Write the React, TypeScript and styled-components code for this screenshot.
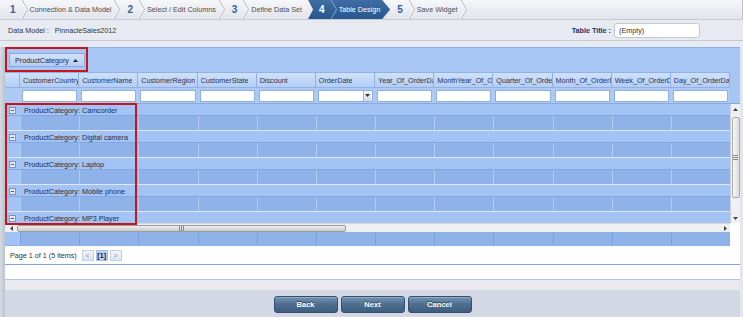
import React from 'react';
import styled, { createGlobalStyle } from 'styled-components';

const Global = createGlobalStyle`
  html, body { margin: 0; padding: 0; }
  body { background: #e8eaf1; font-family: "Liberation Sans", Arial, sans-serif; }
  * { box-sizing: border-box; }
`;

const Page = styled.div`
  position: relative;
  width: 743px;
  height: 317px;
  overflow: hidden;
  display: flex;
  flex-direction: column;
  background: #e8eaf1;
  font-size: 7.2px;
  color: #333;
`;

/* ---------- Wizard ---------- */
const Wizard = styled.div`
  height: 20px;
  flex: none;
  display: flex;
  align-items: stretch;
  padding-left: 3px;
  background: linear-gradient(#f6f7fa, #e1e4eb);
  border-bottom: 1px solid #c6cad4;
  border-right: 1px solid #bfc4ce;
`;

const Step = styled.div<{ $active?: boolean }>`
  display: flex;
  align-items: stretch;
  margin-left: ${(p) => (p.$active ? '4px' : '0')};
  padding: ${(p) => (p.$active ? '0 8px 0 4px' : '0')};
  background: ${(p) => (p.$active ? 'linear-gradient(#3f6ca3, #27578e)' : 'transparent')};
  clip-path: ${(p) =>
    p.$active
      ? 'polygon(0 0, calc(100% - 8px) 0, 100% 50%, calc(100% - 8px) 100%, 0 100%, 5px 50%)'
      : 'none'};
`;

const StepNum = styled.span<{ $active?: boolean }>`
  display: flex;
  align-items: center;
  padding: 0 5px 0 7px;
  font-size: 10px;
  font-weight: bold;
  color: ${(p) => (p.$active ? '#ffffff' : '#34609a')};
`;

const StepLabel = styled.span<{ $active?: boolean }>`
  display: flex;
  align-items: center;
  padding: 0 2px 0 2px;
  white-space: nowrap;
  color: ${(p) => (p.$active ? '#ffffff' : '#4a4d56')};
`;

const ChevronSvg = styled.svg`
  display: block;
  flex: none;
  align-self: center;
`;

const Chevron = ({ active }: { active?: boolean }) => (
  <ChevronSvg width="7" height="19" viewBox="0 0 7 19">
    {!active && <polyline points="0,0 5.5,9.5 0,19" fill="none" stroke="#ffffff" strokeWidth="1" />}
    <polyline
      points="1,0 6.5,9.5 1,19"
      fill="none"
      stroke={active ? '#8aa6cc' : '#b3b7c2'}
      strokeWidth="1"
    />
  </ChevronSvg>
);

/* ---------- Info row ---------- */
const InfoRow = styled.div`
  height: 21px;
  flex: none;
  display: flex;
  align-items: center;
  justify-content: space-between;
  padding: 0 43px 0 8px;
  border-bottom: 1px solid #c5c9d3;
`;

const InfoPair = styled.div`
  display: flex;
  align-items: center;
  gap: 6px;
`;

const InfoLabel = styled.span<{ $strong?: boolean }>`
  color: ${(p) => (p.$strong ? '#2b2d62' : '#333')};
  font-weight: ${(p) => (p.$strong ? 'bold' : 'normal')};
`;

const TitleInput = styled.div`
  width: 86px;
  height: 15px;
  display: flex;
  align-items: center;
  padding-left: 4px;
  background: #fff;
  border: 1px solid #c4c8d2;
  border-radius: 3px;
  color: #333;
  margin-left: -3px;
`;

const Spacer = styled.div`
  height: 6px;
  flex: none;
`;

/* ---------- Body ---------- */
const BodyRow = styled.div`
  flex: 1;
  display: flex;
  min-height: 0;
`;

const LeftGutter = styled.div`
  width: 5px;
  flex: none;
  background: linear-gradient(to right, #d6dae2, #bcc3cf);
`;

const RightGutter = styled.div`
  width: 3px;
  flex: none;
  background: #e3e6ed;
`;

const Main = styled.div`
  flex: 1;
  display: flex;
  flex-direction: column;
  min-width: 0;
`;

const GroupPanel = styled.div`
  height: 25px;
  flex: none;
  padding: 5px 0 0 4px;
  background: #a8c6f3;
  border-top: 1px solid #8aaee5;
`;

const GroupButton = styled.div`
  display: inline-flex;
  align-items: center;
  gap: 4px;
  height: 14px;
  padding: 0 6px 0 5px;
  background: linear-gradient(#d3e2fa, #b5cdf3);
  border: 1px solid #86a9de;
  color: #1f2a44;
`;

const TableGrid = styled.div`
  display: grid;
  grid-template-columns: 15px repeat(12, 1fr) 10px;
`;

const HeaderRow = styled(TableGrid)`
  height: 16px;
  background: #a8c6f3;
`;

const HeaderCell = styled.div`
  display: flex;
  align-items: center;
  padding-left: 3px;
  overflow: hidden;
  white-space: nowrap;
  color: #263250;
  background: linear-gradient(#cfe1fa, #b4cdf4);
  border-top: 1px solid #8fb1e6;
  border-right: 1px solid #8fb1e6;
  border-bottom: 1px solid #8fb1e6;
`;

const HeaderText = styled.span`
  display: block;
  overflow: hidden;
  white-space: nowrap;
  max-width: 100%;
`;

const PanelFill = styled.div<{ $white?: boolean }>`
  background: ${(p) => (p.$white ? '#ffffff' : '#a8c6f3')};
`;

const FilterRow = styled(TableGrid)`
  height: 15px;
  background: #aecaf4;
`;

const FilterCell = styled.div`
  display: flex;
  align-items: center;
  padding: 0 2px;
`;

const FilterInput = styled.div`
  position: relative;
  flex: 1;
  height: 12px;
  background: #fff;
  border: 1px solid #8eaedd;
`;

const DropBtn = styled.div`
  position: absolute;
  right: 1px;
  top: 0;
  width: 8px;
  height: 10px;
  background: linear-gradient(#f4f6fa, #d4dbe6);
  border-left: 1px solid #aab6c8;
  display: flex;
  align-items: center;
  justify-content: center;
`;

const BodyArea = styled.div`
  height: 120px;
  flex: none;
  display: flex;
  border-top: 1px solid #86aae2;
`;

const Viewport = styled.div`
  flex: 1;
  overflow: hidden;
  background: #a3c3f4;
`;

const GroupHeader = styled.div`
  height: 12px;
  display: flex;
  align-items: center;
  gap: 8px;
  padding-left: 4px;
  padding-top: 1px;
  background: #a3c3f4;
  border-bottom: 1px solid #80a8e5;
  color: #262d46;
  white-space: nowrap;
`;

const DataRow = styled.div<{ $footer?: boolean }>`
  display: grid;
  grid-template-columns: 15px repeat(12, 1fr);
  height: ${(p) => (p.$footer ? '14px' : '15px')};
  border-bottom: 1px solid ${(p) => (p.$footer ? '#8fb1e6' : '#dde8fb')};
`;

const DataCell = styled.div<{ $indent?: boolean; $footer?: boolean }>`
  background: ${(p) => (p.$indent ? '#a3c3f4' : '#8fb2e8')};
  border-left: ${(p) =>
    p.$indent ? 'none' : `1px solid ${p.$footer ? '#7aa3e0' : '#b2ccf3'}`};
`;

const VScroll = styled.div`
  width: 10px;
  flex: none;
  display: flex;
  flex-direction: column;
  align-items: center;
  background: #eff0f3;
  border-left: 1px solid #cdd1d8;
  padding: 3px 0 2px;
`;

const VThumb = styled.div`
  width: 8px;
  height: 81px;
  margin-top: 5px;
  background: linear-gradient(to right, #f7f7f7, #dcdcdc);
  border: 1px solid #aaaaaa;
  border-radius: 2px;
  display: flex;
  align-items: center;
  justify-content: center;
`;

const VTrack = styled.div`
  flex: 1;
`;

const HScrollRow = styled.div`
  height: 9px;
  flex: none;
  display: flex;
`;

const HScroll = styled.div`
  flex: 1;
  display: flex;
  align-items: center;
  background: #efefef;
  border-top: 1px solid #d5d5d5;
  padding: 0 2px 0 4px;
`;

const HThumb = styled.div`
  width: 329px;
  height: 7px;
  margin-left: 3px;
  background: linear-gradient(#eeeeee, #c9c9c9);
  border: 1px solid #9d9d9d;
  border-radius: 2px;
  display: flex;
  align-items: center;
  justify-content: center;
`;

const Corner = styled.div`
  width: 10px;
  flex: none;
  background: #ffffff;
`;

const FooterWrap = styled.div`
  display: flex;
  height: 14px;
  flex: none;
`;

const FooterCells = styled.div`
  flex: 1;
`;

const Pager = styled.div`
  height: 18px;
  flex: none;
  display: flex;
  align-items: center;
  padding-left: 5px;
  background: #ffffff;
  color: #333;
`;

const PagerText = styled.span`
  margin-right: 5px;
`;

const PageBtn = styled.div<{ $current?: boolean }>`
  width: 12px;
  height: 11px;
  margin-right: 2px;
  display: flex;
  align-items: center;
  justify-content: center;
  font-weight: ${(p) => (p.$current ? 'bold' : 'normal')};
  color: ${(p) => (p.$current ? '#222' : '#8a96a8')};
  background: ${(p) => (p.$current ? '#bcd2f3' : 'linear-gradient(#f2f5fa, #dde5f1)')};
  border: 1px solid ${(p) => (p.$current ? '#a9c1e6' : '#c6d0de')};
`;

const WhiteStrip = styled.div`
  height: 16px;
  flex: none;
  background: #ffffff;
  border-top: 1px solid #80a6de;
  border-bottom: 1px solid #b7c4da;
`;

const ActionBar = styled.div`
  flex: 1;
  display: flex;
  justify-content: center;
  align-items: flex-start;
  gap: 3px;
  padding-top: 16px;
  background: linear-gradient(#e9eaf0 0, #e9eaf0 10px, #d4d8e4 10px);
`;

const ActionButton = styled.button`
  width: 64px;
  height: 17px;
  padding: 0;
  font-family: "Liberation Sans", Arial, sans-serif;
  font-size: 7.6px;
  font-weight: bold;
  color: #ffffff;
  text-shadow: 0 -1px 0 #2b4560;
  background: linear-gradient(#7592b0, #4f6e8f 50%, #3f5e7e);
  border: 1px solid #32506d;
  border-radius: 3px;
  box-shadow: inset 0 1px 0 #94acc5;
`;

const Annotation = styled.div<{ $left: number; $top: number; $w: number; $h: number }>`
  position: absolute;
  left: ${(p) => p.$left}px;
  top: ${(p) => p.$top}px;
  width: ${(p) => p.$w}px;
  height: ${(p) => p.$h}px;
  border: 2px solid #c8141c;
  pointer-events: none;
`;

const Tri = ({ dir, color = '#444' }: { dir: 'up' | 'down' | 'left' | 'right'; color?: string }) => {
  const pts = {
    up: '0,4 2.5,1 5,4',
    down: '0,1 2.5,4 5,1',
    left: '4,0 1,2.5 4,5',
    right: '1,0 4,2.5 1,5',
  }[dir];
  return (
    <svg width="5" height="5" viewBox="0 0 5 5" style={{ display: 'block', flex: 'none' }}>
      <polygon points={pts} fill={color} />
    </svg>
  );
};

const Grip = ({ vertical }: { vertical?: boolean }) =>
  vertical ? (
    <svg width="5" height="5" viewBox="0 0 5 5">
      <path d="M0 0.5H5M0 2.5H5M0 4.5H5" stroke="#8a8a8a" strokeWidth="1" />
    </svg>
  ) : (
    <svg width="5" height="5" viewBox="0 0 5 5">
      <path d="M0.5 0V5M2.5 0V5M4.5 0V5" stroke="#8a8a8a" strokeWidth="1" />
    </svg>
  );

const ExpandIcon = () => (
  <svg width="7" height="7" viewBox="0 0 7 7" style={{ display: 'block', flex: 'none' }}>
    <rect x="0.5" y="0.5" width="6" height="6" fill="#e2ebf8" stroke="#7d94b8" />
    <path d="M2 3.5H5" stroke="#4a5a78" strokeWidth="1" />
  </svg>
);

const columns = [
  'CustomerCountry',
  'CustomerName',
  'CustomerRegion',
  'CustomerState',
  'Discount',
  'OrderDate',
  'Year_Of_OrderDate',
  'MonthYear_Of_OrderDate',
  'Quarter_Of_OrderDate',
  'Month_Of_OrderDate',
  'Week_Of_OrderDate',
  'Day_Of_OrderDate',
];

const groups = ['Camcorder', 'Digital camera', 'Laptop', 'Mobile phone', 'MP3 Player'];

const steps = [
  { n: 1, label: 'Connection & Data Model' },
  { n: 2, label: 'Select / Edit Columns' },
  { n: 3, label: 'Define Data Set' },
  { n: 4, label: 'Table Design', active: true },
  { n: 5, label: 'Save Widget' },
];

const Cells = ({ footer }: { footer?: boolean }) => (
  <DataRow $footer={footer}>
    <DataCell $indent />
    {columns.map((c) => (
      <DataCell key={c} $footer={footer} />
    ))}
  </DataRow>
);

export default function App() {
  return (
    <Page>
      <Global />
      <Wizard>
        {steps.map((s, i) => {
          const nextActive = steps[i + 1]?.active;
          return (
            <Step key={s.n} $active={s.active}>
              <StepNum $active={s.active}>{s.n}</StepNum>
              <Chevron active={s.active} />
              <StepLabel $active={s.active}>{s.label}</StepLabel>
              {!s.active && !nextActive && <Chevron />}
            </Step>
          );
        })}
      </Wizard>

      <InfoRow>
        <InfoPair>
          <InfoLabel>Data Model :</InfoLabel>
          <InfoLabel>PinnacleSales2012</InfoLabel>
        </InfoPair>
        <InfoPair>
          <InfoLabel $strong>Table Title :</InfoLabel>
          <TitleInput>(Empty)</TitleInput>
        </InfoPair>
      </InfoRow>

      <Spacer />

      <BodyRow>
        <LeftGutter />
        <Main>
          <GroupPanel>
            <GroupButton>
              ProductCategory
              <Tri dir="up" color="#1f2a44" />
            </GroupButton>
          </GroupPanel>

          <HeaderRow>
            <HeaderCell />
            {columns.map((c) => (
              <HeaderCell key={c}>
                <HeaderText>{c}</HeaderText>
              </HeaderCell>
            ))}
            <PanelFill />
          </HeaderRow>

          <FilterRow>
            <div />
            {columns.map((c) => (
              <FilterCell key={c}>
                <FilterInput>
                  {c === 'OrderDate' && (
                    <DropBtn>
                      <Tri dir="down" color="#333" />
                    </DropBtn>
                  )}
                </FilterInput>
              </FilterCell>
            ))}
            <PanelFill />
          </FilterRow>

          <BodyArea>
            <Viewport>
              {groups.map((g) => (
                <React.Fragment key={g}>
                  <GroupHeader>
                    <ExpandIcon />
                    ProductCategory: {g}
                  </GroupHeader>
                  <Cells />
                </React.Fragment>
              ))}
            </Viewport>
            <VScroll>
              <Tri dir="up" />
              <VThumb>
                <Grip vertical />
              </VThumb>
              <VTrack />
              <Tri dir="down" />
            </VScroll>
          </BodyArea>

          <HScrollRow>
            <HScroll>
              <Tri dir="left" />
              <HThumb>
                <Grip />
              </HThumb>
              <VTrack />
              <Tri dir="right" />
            </HScroll>
            <Corner />
          </HScrollRow>

          <FooterWrap>
            <FooterCells>
              <Cells footer />
            </FooterCells>
            <Corner />
          </FooterWrap>

          <Pager>
            <PagerText>Page 1 of 1 (5 items)</PagerText>
            <PageBtn>&lt;</PageBtn>
            <PageBtn $current>[1]</PageBtn>
            <PageBtn>&gt;</PageBtn>
          </Pager>

          <WhiteStrip />

          <ActionBar>
            <ActionButton>Back</ActionButton>
            <ActionButton>Next</ActionButton>
            <ActionButton>Cancel</ActionButton>
          </ActionBar>
        </Main>
        <RightGutter />
      </BodyRow>

      <Annotation $left={5} $top={47} $w={83} $h={25} />
      <Annotation $left={5} $top={103} $w={132} $h={122} />
    </Page>
  );
}
